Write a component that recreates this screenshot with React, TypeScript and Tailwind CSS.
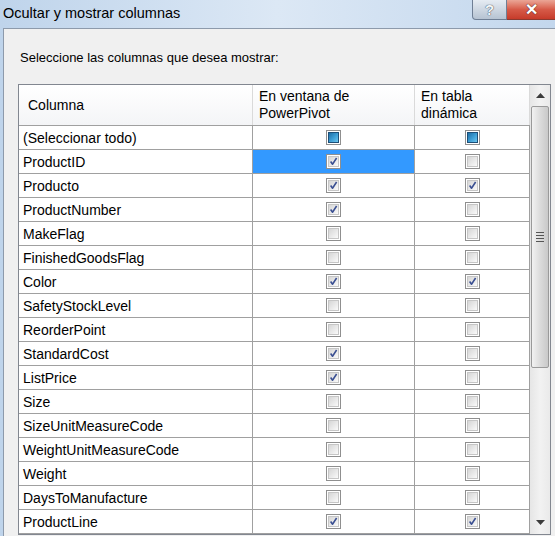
import React from "react";

type Estado = "on" | "off" | "mixed";

const FILAS: { nombre: string; ventana: Estado; tabla: Estado }[] = [
  { nombre: "(Seleccionar todo)", ventana: "mixed", tabla: "mixed" },
  { nombre: "ProductID", ventana: "on", tabla: "off" },
  { nombre: "Producto", ventana: "on", tabla: "on" },
  { nombre: "ProductNumber", ventana: "on", tabla: "off" },
  { nombre: "MakeFlag", ventana: "off", tabla: "off" },
  { nombre: "FinishedGoodsFlag", ventana: "off", tabla: "off" },
  { nombre: "Color", ventana: "on", tabla: "on" },
  { nombre: "SafetyStockLevel", ventana: "off", tabla: "off" },
  { nombre: "ReorderPoint", ventana: "off", tabla: "off" },
  { nombre: "StandardCost", ventana: "on", tabla: "off" },
  { nombre: "ListPrice", ventana: "on", tabla: "off" },
  { nombre: "Size", ventana: "off", tabla: "off" },
  { nombre: "SizeUnitMeasureCode", ventana: "off", tabla: "off" },
  { nombre: "WeightUnitMeasureCode", ventana: "off", tabla: "off" },
  { nombre: "Weight", ventana: "off", tabla: "off" },
  { nombre: "DaysToManufacture", ventana: "off", tabla: "off" },
  { nombre: "ProductLine", ventana: "on", tabla: "on" },
];

function Casilla({ estado }: { estado: Estado }) {
  if (estado === "mixed") {
    return (
      <span className="flex h-[15px] w-[15px] border border-[#8f8f8f] bg-white p-[1px]">
        <span className="h-full w-full border border-[#1d4f78] bg-gradient-to-br from-[#1f6fa6] via-[#3b9bd2] to-[#6cc6ee]" />
      </span>
    );
  }
  return (
    <span className="flex h-[15px] w-[15px] border border-[#8f8f8f] bg-white p-[1px]">
      <span className="flex h-full w-full items-center justify-center border border-[#c6c6c6] bg-gradient-to-br from-[#d6d6d6] to-[#fafafa]">
        {estado === "on" && (
          <svg width="11" height="11" viewBox="0 0 11 11">
            <path d="M2 5.5 L4.3 8.8 L9.3 1.2" fill="none" stroke="#3a4f92" strokeWidth="1.9" strokeLinejoin="round" />
          </svg>
        )}
      </span>
    </span>
  );
}

function BarraDesplazamiento() {
  return (
    <div className="flex w-[21px] flex-col bg-gradient-to-r from-[#e6e6e6] via-[#f2f2f2] to-[#eaeaea]">
      <div className="flex h-[21px] items-center justify-center">
        <svg width="9" height="5" viewBox="0 0 9 5">
          <path d="M4.5 0 L9 5 L0 5 Z" fill="#3c3c3c" />
        </svg>
      </div>
      <div className="mx-[1px] flex h-[262px] items-center justify-center rounded-[2px] border border-[#9a9a9a] bg-gradient-to-r from-[#f2f2f2] via-[#dcdcdc] to-[#c9c9c9]">
        <div className="flex flex-col gap-[2px]">
          <span className="h-[1px] w-[8px] bg-[#555]" />
          <span className="h-[1px] w-[8px] bg-[#555]" />
          <span className="h-[1px] w-[8px] bg-[#555]" />
          <span className="h-[1px] w-[8px] bg-[#555]" />
        </div>
      </div>
      <div className="flex-1" />
      <div className="flex h-[22px] items-center justify-center pb-[2px]">
        <svg width="9" height="5" viewBox="0 0 9 5">
          <path d="M0 0 L9 0 L4.5 5 Z" fill="#3c3c3c" />
        </svg>
      </div>
    </div>
  );
}

export default function App() {
  return (
    <div className="relative flex h-[536px] w-[555px] flex-col overflow-hidden bg-gradient-to-r from-[#bfd4eb] via-[#dce8f5] to-[#c3d7ed] font-['Liberation_Sans',Arial,sans-serif] text-black">
      {/* barra de título */}
      <div className="flex h-[28px] items-start justify-between">
        <span className="pl-[3px] pt-[3px] text-[14.5px] text-[#000]">Ocultar y mostrar columnas</span>
        <div className="flex h-[20px]">
          <div className="flex w-[35px] items-center justify-center rounded-bl-[4px] border border-t-0 border-[#6f7f95] bg-gradient-to-b from-[#e6ecf3] to-[#b6c3d2]">
            <span className="text-[15px] font-bold leading-none text-[#f4f6f8] [text-shadow:0_0_1px_#3e4a5a,0_0_1px_#3e4a5a]">?</span>
          </div>
          <div className="flex w-[48px] items-center justify-center border-b border-[#8a3a30] bg-gradient-to-b from-[#eaa596] via-[#d65a48] to-[#c63b2a]">
            <span className="text-[16px] font-bold leading-none text-white [text-shadow:0_0_1px_#5a1e16,0_0_1px_#5a1e16]">✕</span>
          </div>
        </div>
      </div>

      {/* cuerpo */}
      <div className="ml-[3px] flex flex-1 flex-col border-l border-t border-[#8d9aab] bg-[#f0f0f0]">
        <p className="ml-[16px] mt-[21px] text-[13px] leading-[16px]">Seleccione las columnas que desea mostrar:</p>

        <div className="ml-[14px] mt-[18px] flex w-[533px] border border-[#828790] bg-white">
          <div className="flex w-[511px] flex-col">
            <div className="flex h-[41px] border-b border-[#a0a0a0] bg-gradient-to-b from-white to-[#f4f5f7] text-[14px] leading-[17px]">
              <div className="flex w-[234px] items-center border-r border-[#dadada] pl-[9px]">Columna</div>
              <div className="flex w-[162px] flex-col justify-center border-r border-[#dadada] pl-[6px]">
                <span>En ventana de</span>
                <span>PowerPivot</span>
              </div>
              <div className="flex w-[115px] flex-col justify-center border-r border-[#dadada] pl-[6px]">
                <span>En tabla</span>
                <span>dinámica</span>
              </div>
            </div>
            {FILAS.map((f) => (
              <div key={f.nombre} className="flex h-[24px] border-b border-[#a0a0a0] text-[14px]">
                <div className="flex w-[234px] items-center border-r border-[#a0a0a0] pl-[4px] pt-[1px]">{f.nombre}</div>
                <div className={`flex w-[162px] items-center justify-center border-r border-[#a0a0a0] ${f.nombre === "ProductID" ? "bg-[#3399ff]" : ""}`}>
                  <Casilla estado={f.ventana} />
                </div>
                <div className="flex w-[115px] items-center justify-center border-r border-[#a0a0a0]">
                  <Casilla estado={f.tabla} />
                </div>
              </div>
            ))}
          </div>
          <BarraDesplazamiento />
        </div>
      </div>
    </div>
  );
}
